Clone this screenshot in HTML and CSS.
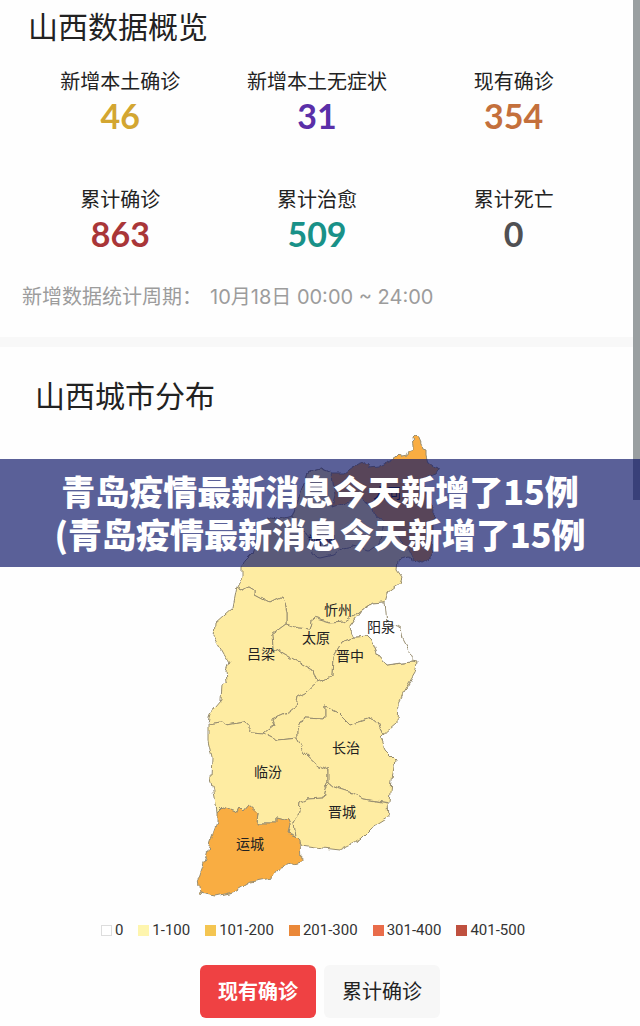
FILE: index.html
```html
<!DOCTYPE html>
<html lang="zh-CN">
<head>
<meta charset="utf-8">
<meta name="viewport" content="width=device-width, initial-scale=1">
<title>山西数据概览</title>
<link rel="stylesheet" href="styles.css">
</head>
<body>
<main class="page">
  <section class="overview">
    <h2 class="title">山西数据概览</h2>
    <dl class="stats">
      <div class="stat"><dt>新增本土确诊</dt><dd class="gold">46</dd></div>
      <div class="stat"><dt>新增本土无症状</dt><dd class="purple">31</dd></div>
      <div class="stat"><dt>现有确诊</dt><dd class="orange">354</dd></div>
      <div class="stat"><dt>累计确诊</dt><dd class="red">863</dd></div>
      <div class="stat"><dt>累计治愈</dt><dd class="teal">509</dd></div>
      <div class="stat"><dt>累计死亡</dt><dd class="gray">0</dd></div>
    </dl>
    <p class="period"><span>新增数据统计周期：</span><span>10月18日 00:00 ~ 24:00</span></p>
  </section>

  <section class="cities">
    <h2 class="title title-cities">山西城市分布</h2>
    <svg class="map" viewBox="190 430 260 475" role="img" aria-label="山西城市分布">
      <defs>
        <filter id="rough" x="-5%" y="-5%" width="110%" height="110%">
          <feTurbulence type="fractalNoise" baseFrequency="0.14" numOctaves="1" seed="4" result="n"/>
          <feDisplacementMap in="SourceGraphic" in2="n" scale="7" xChannelSelector="R" yChannelSelector="G"/>
        </filter>
      </defs>
      <g class="regions" filter="url(#rough)">
        <path class="low" d="M332 473L320 468 313 470 307 473 303 487 297 503 292 517 280 520 267 517 258 527 257 537 252 553 245 560 242 567 242 577 237 587 240 591 250 587 255 590 255 595 270 603 282 597 285 602 287 613 287 624 298 628 310 629 313 618 330 623 345 622 362 610 373 603 385 602 388 592 400 583 402 577 397 570 398 560 408 557 413 560 433 538 377 500Z"/>
        <path class="low" d="M332 473L320 468 313 470 307 473 303 487 297 503 292 517 300 530 310 537 312 553 320 558 333 555 343 548 352 546 370 550 380 543 383 520 377 500Z"/>
        <path class="mid" d="M332 473L345 473 353 467 367 462 370 468 378 467 390 461 395 458 400 453 402 457 407 456 408 452 413 450 413 445 412 438 415 435 418 436 421 443 423 448 426 449 426 455 428 463 432 466 440 469 437 474 428 477 424 483 427 495 434 510 433 522 433 538 431 558 423 562 413 559 407 547 393 530 383 520 377 517 373 507 360 498 347 502 332 507 335 495 333 482Z"/>
        <path class="low" d="M237 587L240 591 250 587 255 590 255 595 270 603 282 597 285 602 287 613 287 624 272 635 273 647 290 657 313 670 317 682 305 693 297 697 295 708 290 712 272 720 274 725 264 733 253 732 244 722 227 725 222 722 208 724 210 713 221 700 222 685 227 682 226 671 229 662 223 653 214 637 215 623 233 607Z"/>
        <path class="low" d="M287 624L298 628 310 629 313 618 330 623 345 622 362 610 350 627 355 637 342 642 333 657 332 677 323 680 317 682 313 670 290 657 273 647 272 635Z"/>
        <path class="low" d="M317 682L323 680 332 677 333 657 342 642 355 637 368 636 372 640 378 655 387 665 402 663 412 662 417 663 415 673 403 693 398 703 397 723 383 735 377 722 372 718 350 725 337 712 325 707 325 718 303 717 297 730 297 738 278 740 264 733 274 725 272 720 290 712 295 708 297 697 305 693Z"/>
        <path class="none" d="M362 610L373 603 385 602 387 623 401 628 403 640 412 657 412 662 402 663 387 665 378 655 372 640 368 636 355 637 350 627Z"/>
        <path class="low" d="M208 724L222 722 227 725 244 722 253 732 264 733 278 740 297 738 305 753 318 765 328 770 328 783 325 788 323 798 308 799 300 803 299 812 294 822 296 836 288 833 290 825 288 820 277 817 277 823 257 823 258 813 249 805 244 811 240 807 237 813 222 807 217 812 215 797 211 777 212 757 208 740Z"/>
        <path class="low" d="M297 738L297 730 303 717 325 718 325 707 337 712 350 725 372 718 377 722 383 735 380 738 385 750 395 760 392 780 390 803 363 799 352 793 333 787 328 783 328 770 318 765 305 753Z"/>
        <path class="low" d="M328 783L333 787 352 793 363 799 387 803 388 818 372 828 360 840 340 850 323 848 302 845 296 836 294 822 299 812 300 803 308 799 323 798 325 788Z"/>
        <path class="mid" d="M217 812L222 807 237 813 240 807 244 811 249 805 258 813 257 823 277 823 277 817 288 820 290 825 288 833 296 836 300 840 301 862 280 867 272 878 250 882 233 892 215 896 200 893 198 880 205 860 210 842 217 823Z"/>
      </g>
      <g class="names">
        <text x="387" y="498">大同</text>
        <text x="322" y="546">朔州</text>
        <text x="338" y="615">忻州</text>
        <text x="381" y="632">阳泉</text>
        <text x="316" y="643">太原</text>
        <text x="350" y="661">晋中</text>
        <text x="261" y="659">吕梁</text>
        <text x="346" y="753">长治</text>
        <text x="268" y="777">临汾</text>
        <text x="342" y="817">晋城</text>
        <text x="250" y="849">运城</text>
      </g>
    </svg>
    <ul class="legend">
      <li><i class="swatch s0"></i>0</li>
      <li><i class="swatch s1"></i>1-100</li>
      <li><i class="swatch s2"></i>101-200</li>
      <li><i class="swatch s3"></i>201-300</li>
      <li><i class="swatch s4"></i>301-400</li>
      <li><i class="swatch s5"></i>401-500</li>
    </ul>
    <div class="switch">
      <button type="button" class="tab active" aria-pressed="true">现有确诊</button>
      <button type="button" class="tab" aria-pressed="false">累计确诊</button>
    </div>
  </section>

  <div class="scroll-edge"></div>
  <h1 class="banner">青岛疫情最新消息今天新增了15例<br>(青岛疫情最新消息今天新增了15例</h1>
</main>
</body>
</html>
```
FILE: styles.css
```css
* {
  box-sizing: border-box;
}

body {
  margin: 0;
  background: #fefefe;
  color: #222;
  font-family: "Noto Sans CJK SC", sans-serif;
}

.page {
  position: relative;
}

.overview {
  padding: 5px 28px 26px 22px;
  border-bottom: 10px solid #f8f8f8;
}

.title {
  margin: 0 0 0 6px;
  font-size: 30px;
  line-height: 40px;
  font-weight: 400;
}

.title-cities {
  margin-left: 35px;
}

.stats {
  display: grid;
  grid-template-columns: repeat(3, 1fr);
  row-gap: 49px;
  margin: 22px 0 29px;
  text-align: center;
}

.stat dt {
  margin-bottom: 1px;
  font-size: 20px;
  line-height: 28px;
}

.stat dd {
  margin: 0;
  font-family: Lato, sans-serif;
  font-size: 34px;
  line-height: 40px;
  font-weight: 700;
}

.gold { color: #d3a631; }
.purple { color: #5a2fa8; }
.orange { color: #c4703c; }
.red { color: #a93638; }
.teal { color: #199188; }
.gray { color: #505053; }

.period {
  display: flex;
  flex-wrap: wrap;
  column-gap: 8px;
  margin: 0;
  color: #9c9c9c;
  font-family: Inter, "Noto Sans CJK SC", sans-serif;
  font-size: 20px;
  font-weight: 400;
  line-height: 28px;
}

.cities {
  padding: 27px 0 8px;
}

.map {
  display: block;
  width: 260px;
  margin: 16px auto 15px;
}

.regions {
  stroke: #978d70;
  stroke-width: 1;
  stroke-linejoin: round;
}

.low { fill: #feeca2; }
.mid { fill: #f9ad42; }
.none { fill: #fff; }

.names {
  fill: #222;
  font-size: 14px;
  text-anchor: middle;
}

.legend {
  display: flex;
  flex-wrap: wrap;
  justify-content: center;
  gap: 15px;
  margin: 0 0 25px;
  padding: 0 14px 0 0;
  list-style: none;
  color: #333;
  font-family: Roboto, sans-serif;
  font-size: 15px;
  line-height: 20px;
}

.legend li {
  display: flex;
  align-items: center;
  gap: 3px;
}

.swatch {
  width: 11px;
  height: 11px;
}

.s0 { border: 1px solid #ddd; background: #fff; }
.s1 { background: #fef5ae; }
.s2 { background: #f4c551; }
.s3 { background: #ea8839; }
.s4 { background: #e96c4a; }
.s5 { background: #bf503f; }

.switch {
  display: flex;
  justify-content: center;
  gap: 8px;
}

.tab {
  padding: 11px 18px 13px;
  border: 0;
  border-radius: 6px;
  background: #f7f7f7;
  color: #222;
  font-family: inherit;
  font-size: 20px;
  line-height: 29px;
}

.tab.active {
  background: #ef4143;
  color: #fff;
  font-weight: 700;
}

.scroll-edge {
  position: absolute;
  top: 0;
  right: 0;
  width: 7px;
  height: 500px;
  background: #9a9fa1;
}

.banner {
  position: absolute;
  top: 459px;
  left: 0;
  right: 0;
  margin: 0;
  padding: 10px 0 12px;
  background: rgba(9, 18, 101, 0.67);
  color: #fff;
  font-size: 34px;
  line-height: 43px;
  font-weight: 900;
  text-align: center;
}
```
